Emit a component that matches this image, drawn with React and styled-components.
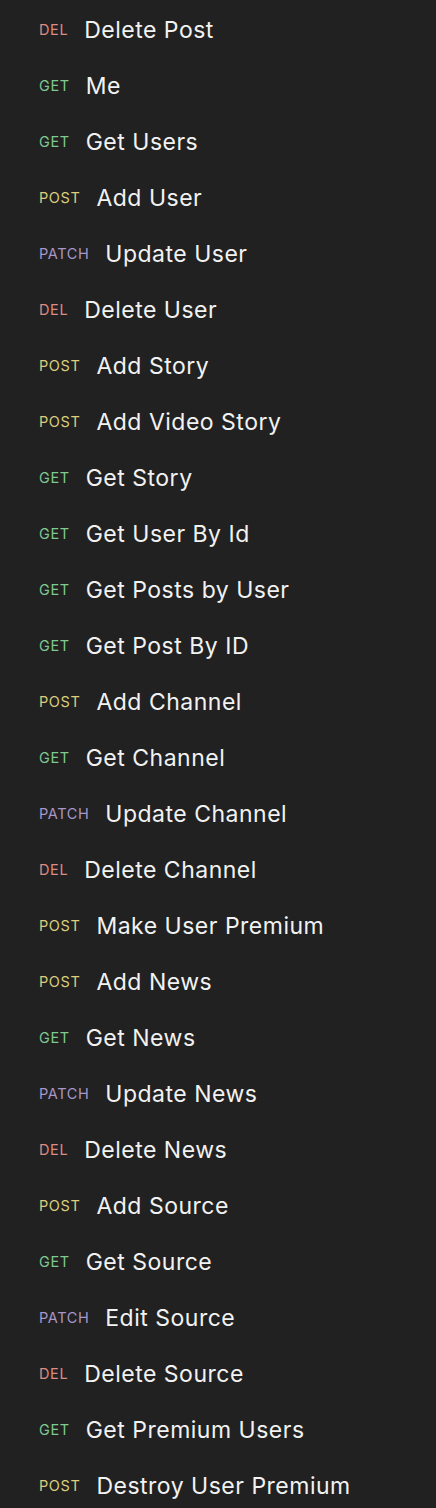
import styled, { createGlobalStyle } from "styled-components";

const requests = [
  ["DEL", "Delete Post"],
  ["GET", "Me"],
  ["GET", "Get Users"],
  ["POST", "Add User"],
  ["PATCH", "Update User"],
  ["DEL", "Delete User"],
  ["POST", "Add Story"],
  ["POST", "Add Video Story"],
  ["GET", "Get Story"],
  ["GET", "Get User By Id"],
  ["GET", "Get Posts by User"],
  ["GET", "Get Post By ID"],
  ["POST", "Add Channel"],
  ["GET", "Get Channel"],
  ["PATCH", "Update Channel"],
  ["DEL", "Delete Channel"],
  ["POST", "Make User Premium"],
  ["POST", "Add News"],
  ["GET", "Get News"],
  ["PATCH", "Update News"],
  ["DEL", "Delete News"],
  ["POST", "Add Source"],
  ["GET", "Get Source"],
  ["PATCH", "Edit Source"],
  ["DEL", "Delete Source"],
  ["GET", "Get Premium Users"],
  ["POST", "Destroy User Premium"],
];

const methodColors = {
  GET: "#7fc990",
  POST: "#dccd7c",
  PATCH: "#a896c9",
  DEL: "#dc8c82",
};

const GlobalStyle = createGlobalStyle`
  html, body {
    margin: 0;
    padding: 0;
    background: #212121;
  }
  body {
    font-family: Inter, "Noto Sans", sans-serif;
  }
`;

const Sidebar = styled.div`
  background: #212121;
  min-height: 1508px;
  padding-top: 2px;
  box-sizing: border-box;
`;

const Row = styled.div`
  display: flex;
  align-items: center;
  gap: 16px;
  height: 56px;
  padding-left: 39px;
`;

const Method = styled.span`
  color: ${(p) => methodColors[p.$method]};
  font-size: 14.5px;
  letter-spacing: 0.6px;
  line-height: 1;
`;

const Name = styled.span`
  color: #f2f2f2;
  font-size: 23px;
  letter-spacing: 0.5px;
  line-height: 1;
`;

export default function App() {
  return (
    <>
      <GlobalStyle />
      <Sidebar>
        {requests.map(([method, name], i) => (
          <Row key={i}>
            <Method $method={method}>{method}</Method>
            <Name>{name}</Name>
          </Row>
        ))}
      </Sidebar>
    </>
  );
}
